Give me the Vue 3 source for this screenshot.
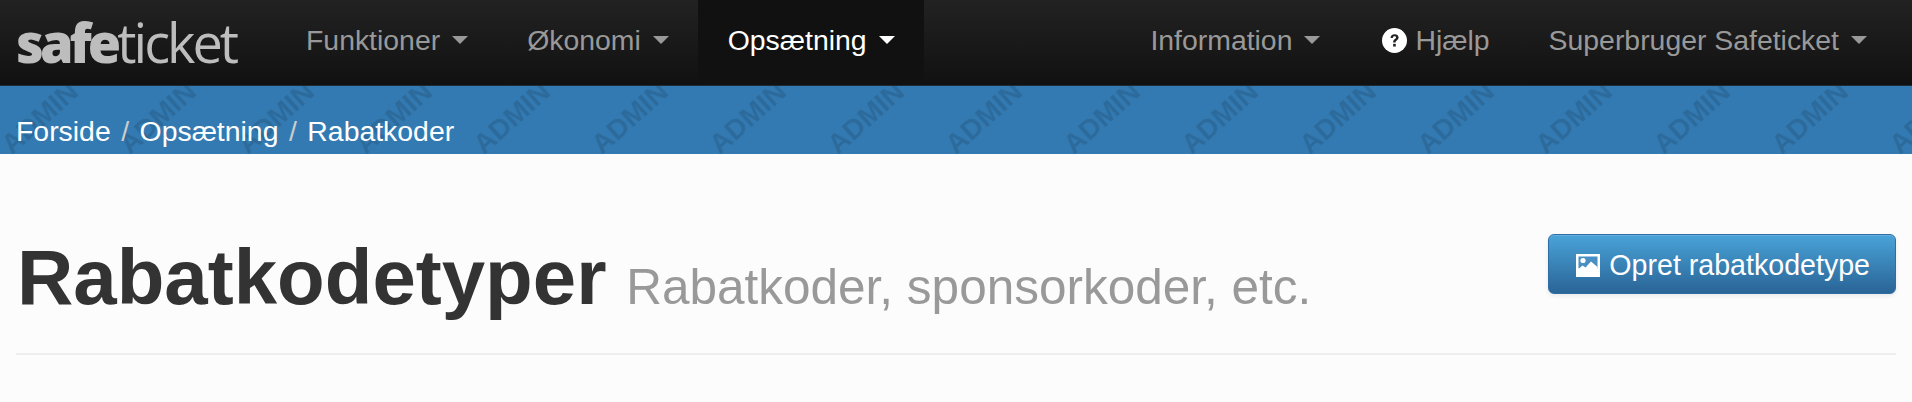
<script setup>
const leftItems = [
  { label: 'Funktioner' },
  { label: 'Økonomi' },
  { label: 'Opsætning', active: true },
]
const crumbs = ['Forside', 'Opsætning', 'Rabatkoder']
const marks = Array.from({ length: 17 })
</script>

<template>
  <div class="page">
    <header class="navbar">
      <a class="brand"><b>safe</b>ticket</a>
      <nav class="nav">
        <a v-for="item in leftItems" :key="item.label" class="nav-item" :class="{ active: item.active }">
          {{ item.label }}<i class="caret"></i>
        </a>
      </nav>
      <nav class="nav nav-right">
        <a class="nav-item info">Information<i class="caret"></i></a>
        <a class="nav-item">
          <svg class="help-icon" viewBox="0 0 24 24">
            <circle cx="12" cy="12" r="12" fill="#fff" />
            <path d="M8.200 9.600c0-2.300 1.600-3.600 3.900-3.600 2.200 0 3.800 1.200 3.800 3.100 0 2.600-2.900 2.600-2.900 4.900h-2.300c0-3.300 2.800-3.300 2.800-4.800 0-.7-.6-1.200-1.500-1.200-1 0-1.500.6-1.600 1.600z" fill="#222" />
            <rect x="10.700" y="15.200" width="2.500" height="2.600" fill="#222" />
          </svg>
          Hjælp
        </a>
        <a class="nav-item">Superbruger Safeticket<i class="caret"></i></a>
      </nav>
    </header>

    <div class="crumbbar">
      <div class="watermarks">
        <span v-for="(m, i) in marks" :key="i" class="mark"><span class="mark-text">ADMIN</span></span>
      </div>
      <ul class="breadcrumb">
        <li v-for="(c, i) in crumbs" :key="c">
          <span v-if="i > 0" class="sep">/</span>{{ c }}
        </li>
      </ul>
    </div>

    <main class="content">
      <div class="page-header">
        <h1>Rabatkodetyper <small>Rabatkoder, sponsorkoder, etc.</small></h1>
        <button class="btn">
          <svg class="pic-icon" viewBox="0 0 24 23">
            <rect width="24" height="23" fill="#fff" />
            <rect x="2.500" y="2.500" width="19" height="12" fill="#4a8fc4" />
            <circle cx="7" cy="6.500" r="2.600" fill="#fff" />
            <path d="M2.500 15l4-3.500 3 2 5.500-6 6.500 5.500V18h-19z" fill="#fff" />
          </svg>
          Opret rabatkodetype
        </button>
      </div>
    </main>
  </div>
</template>

<style>
html, body {
  margin: 0;
  background: #fcfcfc;
}
</style>

<style scoped>
.page {
  font-family: "Liberation Sans", Arial, sans-serif;
  font-size: 28.4px;
  height: 402px;
  overflow: hidden;
  background: #fcfcfc;
}

.navbar {
  display: flex;
  height: 85px;
  padding: 0 16px;
  background: linear-gradient(#222222, #111111);
  border-bottom: 1px solid #1c2b38;
}
.brand {
  width: 260px;
  flex: none;
  font-family: "Open Sans", sans-serif;
  font-size: 54px;
  line-height: 84px;
  letter-spacing: -3px;
  color: #bdbdbd;
  filter: blur(.7px);
}
.brand b {
  font-weight: 800;
  letter-spacing: -4px;
}
.nav {
  display: flex;
}
.nav-right {
  margin-left: auto;
}
.nav-item {
  display: flex;
  align-items: center;
  padding: 0 29px 5px 30px;
  color: #999;
  white-space: nowrap;
}
.nav-item.info {
  padding-right: 32px;
}
.nav-item.active {
  color: #fff;
  background: #111;
}
.caret {
  width: 0;
  height: 0;
  margin: 0 0 0 12px;
  border-top: 8px solid currentColor;
  border-left: 8px solid transparent;
  border-right: 8px solid transparent;
}
.help-icon {
  width: 25px;
  height: 25px;
  margin-right: 8px;
}

.crumbbar {
  position: relative;
  height: 68px;
  background: #337ab2;
  overflow: hidden;
}
.watermarks {
  position: absolute;
  top: 0;
  left: -19px;
  display: flex;
}
.mark {
  flex: none;
  width: 118px;
  height: 64px;
  display: flex;
  align-items: center;
  justify-content: center;
}
.mark-text {
  font-size: 28px;
  font-weight: 700;
  color: rgba(0, 0, 0, .13);
  transform: rotate(-42deg);
  filter: blur(.5px);
}
.breadcrumb {
  position: relative;
  display: flex;
  margin: 0;
  padding: 10px 0 0 16px;
  list-style: none;
  line-height: 71px;
  color: #fff;
}
.sep {
  padding: 0 10.5px;
  color: #ccc;
}

.content {
  padding: 0 16px;
}
.page-header {
  display: flex;
  justify-content: space-between;
  height: 199px;
  border-bottom: 2px solid #eee;
}
h1 {
  margin: 73px 0 0 1px;
  font-size: 78px;
  line-height: 100px;
  color: #333;
  font-weight: 700;
  white-space: nowrap;
}
small {
  margin-left: -2px;
  font-size: 49.500px;
  font-weight: 400;
  color: #999;
}
.btn {
  display: flex;
  align-items: center;
  height: 60px;
  margin-top: 80px;
  padding: 2px 25px 0 27px;
  font: inherit;
  font-size: 28.600px;
  color: #fff;
  background: linear-gradient(#49a3d8, #2a6496);
  border: 1px solid #2f6ea5;
  border-radius: 6px;
  box-shadow: inset 0 1px rgba(255, 255, 255, .15), 0 2px 4px rgba(0, 0, 0, .08);
  white-space: nowrap;
}
.pic-icon {
  width: 24px;
  height: 23px;
  margin-right: 9px;
}
</style>
